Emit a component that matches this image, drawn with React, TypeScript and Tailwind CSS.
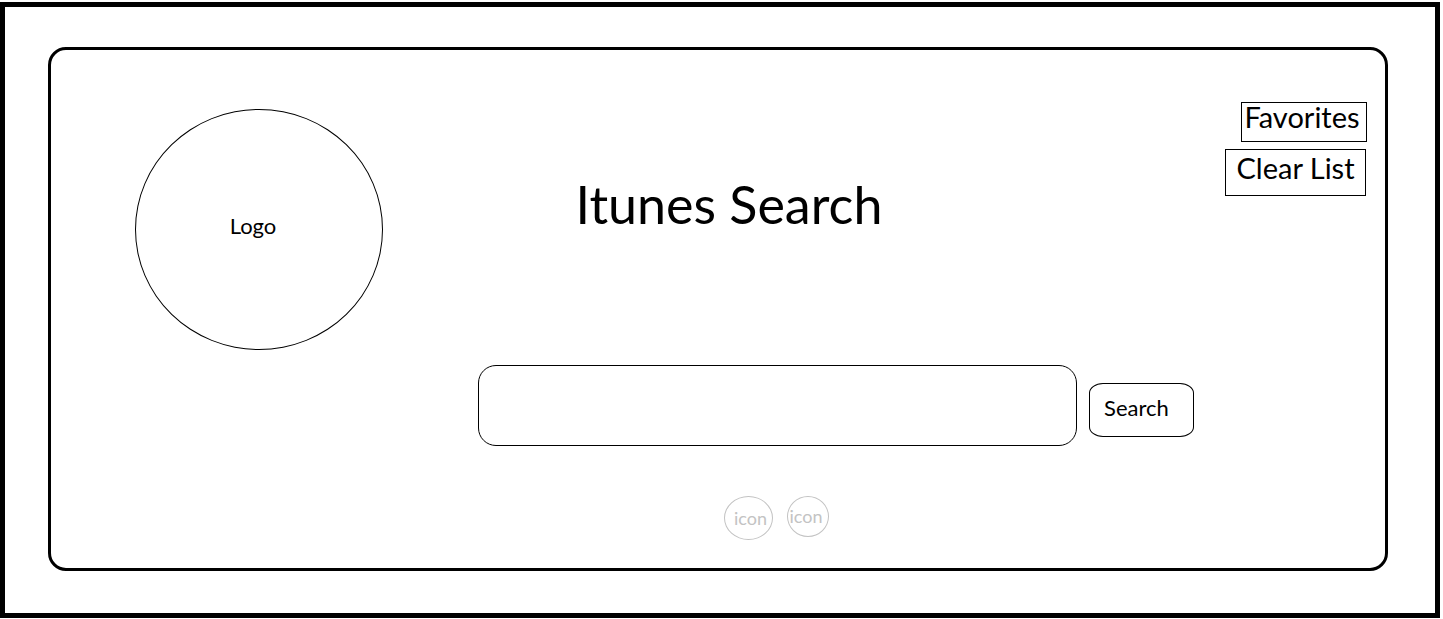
import type { FormEvent } from "react";

export default function App() {
  const handleSubmit = (event: FormEvent) => event.preventDefault();

  return (
    <div className="flex min-h-screen flex-col bg-white pt-[2px] pr-[3px] pb-px font-['Lato',sans-serif] text-black">
      <div className="flex flex-1 flex-col border-[5px] border-black pt-[40px] pr-[47px] pb-[42px] pl-[43px]">
        <main className="flex-1 rounded-[18px] border-[3px] border-black">
          <header className="flex items-start pt-[52px] pr-[18px] pl-[84px]">
            <div className="mt-[7px] flex h-[241px] w-[248px] shrink-0 items-center justify-center rounded-[50%] border border-black pr-3 pb-2 text-[22px]">
              Logo
            </div>
            <h1 className="flex-1 pt-[70px] pr-[150px] text-center text-[52px] leading-[64px]">
              Itunes Search
            </h1>
            <nav className="flex flex-col items-end gap-[7px] text-[29px] leading-7">
              <button
                type="button"
                className="flex h-10 w-[126px] items-start justify-center border border-black pr-1 whitespace-nowrap"
              >
                Favorites
              </button>
              <button
                type="button"
                className="mr-px flex h-[47px] w-[141px] items-start justify-center border border-black pt-1 whitespace-nowrap"
              >
                Clear List
              </button>
            </nav>
          </header>

          <form
            onSubmit={handleSubmit}
            className="grid grid-cols-[1fr_105px] items-start gap-x-3 pt-[15px] pr-[191px] pl-[427px]"
          >
            <input
              type="search"
              aria-label="Search term"
              className="h-[81px] w-full min-w-0 appearance-none rounded-[18px] border border-black bg-white px-5 text-[22px] outline-none"
            />
            <button
              type="submit"
              className="mt-[18px] flex h-[54px] items-center justify-center rounded-[14px/10px] border border-black pr-2.5 pb-1.5 text-[22px]"
            >
              Search
            </button>
            <div className="flex items-start justify-center gap-[14px] pt-[50px] pr-0.5 text-[18px] leading-5 text-[#c3c3c3]">
              <button
                type="button"
                className="flex h-11 w-[49px] items-center justify-center rounded-[50%] border border-[#c3c3c3] pl-1"
              >
                icon
              </button>
              <button
                type="button"
                className="flex h-[41px] w-[42px] items-center justify-center rounded-[50%] border border-[#c3c3c3] pr-1 pb-0.5"
              >
                icon
              </button>
            </div>
          </form>
        </main>
      </div>
    </div>
  );
}
